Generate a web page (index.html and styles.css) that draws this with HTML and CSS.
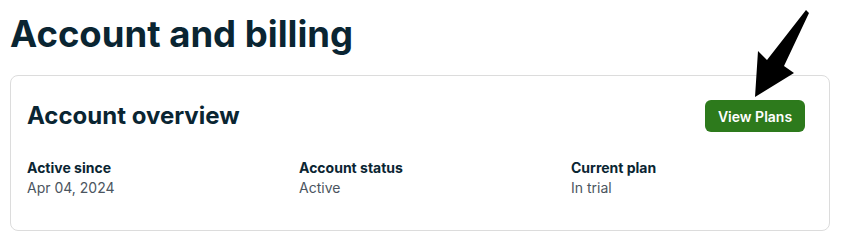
FILE: index.html
```html
<!DOCTYPE html>
<html>
<head>
    <title>Account and billing</title>
    <link rel="stylesheet" href="styles.css">
</head>
<body>
    <div class="page">
        <h1>Account and billing</h1>
        <div class="card">
            <div class="card-header">
                <h2>Account overview</h2>
                <button class="btn-plans">View Plans</button>
            </div>
            <div class="details">
                <div class="detail">
                    <div class="label">Active since</div>
                    <div class="value">Apr 04, 2024</div>
                </div>
                <div class="detail">
                    <div class="label">Account status</div>
                    <div class="value">Active</div>
                </div>
                <div class="detail">
                    <div class="label">Current plan</div>
                    <div class="value">In trial</div>
                </div>
            </div>
        </div>
    </div>

    <!-- annotation arrow pointing at the button -->
    <svg class="arrow" width="843" height="242" viewBox="0 0 843 242">
        <polygon points="806,10 809,13 784,66 794,73 755,97 758,51 767,60" fill="#000"/>
    </svg>
</body>
</html>
```

FILE: styles.css
```css
body {
    margin: 0;
    font-family: 'Inter', 'Liberation Sans', sans-serif;
    background-color: #fff;
    color: #0a2532;
}

.page {
    padding: 12px 13px 0 10px;
}

h1 {
    margin: 0 0 19px 0;
    font-size: 36.5px;
    font-weight: 700;
    line-height: 44px;
}

.card {
    border: 1px solid #dcdcdc;
    border-radius: 8px;
    padding: 24px 24px 32px 16px;
}

.card-header {
    display: flex;
    justify-content: space-between;
    align-items: center;
}

h2 {
    margin: 0;
    font-size: 24px;
    font-weight: 700;
    line-height: 32px;
}

.btn-plans {
    font-family: inherit;
    font-size: 14px;
    font-weight: 600;
    color: #fff;
    background-color: #2d7a1c;
    border: none;
    border-radius: 6px;
    width: 100px;
    height: 32px;
    cursor: pointer;
}

.details {
    display: grid;
    grid-template-columns: repeat(3, 1fr);
    column-gap: 38px;
    margin-top: 26px;
}

.label {
    font-size: 14px;
    font-weight: 700;
    line-height: 20px;
}

.value {
    font-size: 14px;
    line-height: 20px;
    color: #4b5560;
}

.arrow {
    position: absolute;
    top: 0;
    left: 0;
    pointer-events: none;
}
```
